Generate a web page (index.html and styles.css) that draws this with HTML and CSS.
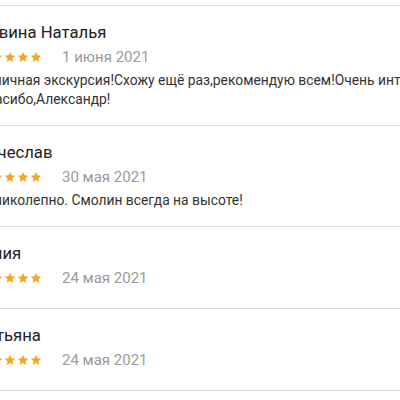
FILE: index.html
```html
<!DOCTYPE html>
<html lang="ru">
<head>
<meta charset="utf-8">
<link rel="stylesheet" href="styles.css">
</head>
<body>
<svg width="0" height="0" class="defs" aria-hidden="true">
  <defs>
    <symbol id="star" viewBox="0 0 24 24">
      <path d="M12 1.8l3.1 6.9 7.4.7-5.6 5 1.7 7.4L12 17.9l-6.6 3.9 1.7-7.4-5.6-5 7.4-.7z"/>
    </symbol>
  </defs>
</svg>
<div class="viewport">
  <ul class="reviews">
    <li class="review">
      <div class="name">Левина Наталья</div>
      <div class="meta">
        <span class="stars"><svg><use href="#star"/></svg><svg><use href="#star"/></svg><svg><use href="#star"/></svg><svg><use href="#star"/></svg><svg><use href="#star"/></svg></span>
        <span class="date">1 июня 2021</span>
      </div>
      <p class="text">Отличная экскурсия!Схожу ещё раз,рекомендую всем!Очень интересно! Спасибо,Александр!</p>
    </li>
    <li class="review">
      <div class="name">Вячеслав</div>
      <div class="meta">
        <span class="stars"><svg><use href="#star"/></svg><svg><use href="#star"/></svg><svg><use href="#star"/></svg><svg><use href="#star"/></svg><svg><use href="#star"/></svg></span>
        <span class="date">30 мая 2021</span>
      </div>
      <p class="text">Великолепно. Смолин всегда на высоте!</p>
    </li>
    <li class="review">
      <div class="name">Юлия</div>
      <div class="meta">
        <span class="stars"><svg><use href="#star"/></svg><svg><use href="#star"/></svg><svg><use href="#star"/></svg><svg><use href="#star"/></svg><svg><use href="#star"/></svg></span>
        <span class="date">24 мая 2021</span>
      </div>
    </li>
    <li class="review">
      <div class="name">Татьяна</div>
      <div class="meta">
        <span class="stars"><svg><use href="#star"/></svg><svg><use href="#star"/></svg><svg><use href="#star"/></svg><svg><use href="#star"/></svg><svg><use href="#star"/></svg></span>
        <span class="date">24 мая 2021</span>
      </div>
    </li>
  </ul>
</div>
</body>
</html>
```
FILE: styles.css
```css
html, body {
  margin: 0;
  padding: 0;
  background: #fff;
  overflow: hidden;
}
.defs {
  display: block;
  width: 0;
  height: 0;
}
.viewport {
  width: 400px;
  height: 400px;
  overflow: hidden;
}
.reviews {
  list-style: none;
  margin: 5px 0 0 0;
  padding: 0;
  border-top: 1px solid #dcdcdc;
  width: 400px;
  font-family: Roboto, "Noto Sans", sans-serif;
}
.review {
  padding: 17px 0 16px 0;
  border-bottom: 1px solid #dcdcdc;
}
.name, .meta, .text {
  margin-left: -22px;
  width: 500px;
}
.name {
  font-size: 16.7px;
  line-height: 20px;
  color: #222;
}
.meta {
  display: flex;
  align-items: center;
  gap: 20px;
  height: 28px;
}
.stars {
  display: flex;
  gap: 1px;
  fill: #f5a623;
}
.stars svg {
  width: 12px;
  height: 12px;
}
.date {
  font-size: 15px;
  color: #9a9a9a;
}
.text {
  margin: 0;
  margin-left: -22px;
  font-size: 13.85px;
  line-height: 19px;
  color: #333;
}
```
